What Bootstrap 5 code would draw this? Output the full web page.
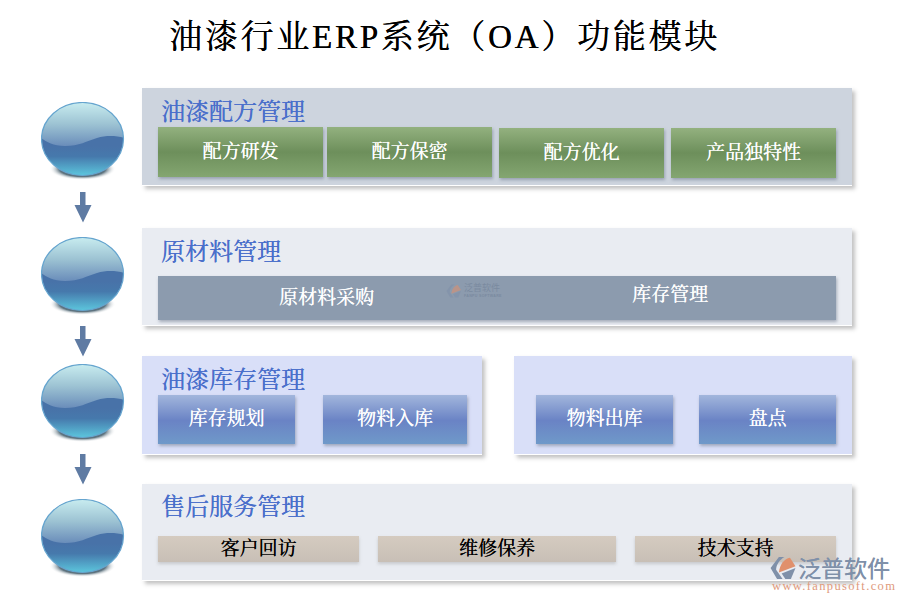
<!DOCTYPE html>
<html lang="zh">
<head>
<meta charset="utf-8">
<title>油漆行业ERP系统（OA）功能模块</title>
<link href="https://cdn.jsdelivr.net/npm/bootstrap@5.3.0/dist/css/bootstrap.min.css" rel="stylesheet">
<style>
html,body{height:600px;overflow:hidden;background:#fff}
body{font-family:"Liberation Serif","Noto Serif CJK SC","Noto Sans CJK SC",serif;position:relative}
.page-title{font-size:33px;font-weight:400;line-height:40px;height:88px;margin:0;padding:17px 0 0 169px;letter-spacing:2.75px;color:#000;font-family:inherit;text-shadow:.3px 0 0 #000}
.sphere-col{width:142px;flex:none;padding-left:41px}
.sphere-col svg{display:block}
.panel-box{box-shadow:3px 3px 4px rgba(120,120,120,.45);border-bottom:1px solid #fff;position:relative}
.panel-h{font-size:24px;line-height:30px;color:#4a6fcb;padding-left:19px;letter-spacing:0;margin:0;font-weight:400;font-family:inherit;text-shadow:.3px 0 0 #4a6fcb}
.tone-a{background:#cdd4de}
.tone-b{background:#e9ecf2}
.tone-c{background:#d9dff8}
.s1{height:98px;width:710px;padding-top:9px}
.s2{height:98px;width:710px;padding-top:9px}
.s3{height:99px;width:340px;padding-top:9px}
.s3b{height:99px;width:338px;margin-left:32px;padding-top:39px}
.s4{height:97px;width:710px;padding-top:8px}
.arrow-gap{padding-left:74px;display:flex;align-items:center}
.g1{height:42px}.g2{height:30px}.g3{height:29px}
.tile{display:flex;align-items:center;justify-content:center;font-size:19px;color:#fff;box-shadow:1px 2px 3px rgba(110,120,140,.55);flex:none;text-shadow:.35px 0 0 currentColor}
.green{height:50px;background:linear-gradient(#93b17f 0%,#6d8f5b 50%,#84a671 100%)}
.slate{height:44px;background:#8c9bae;margin:9px 16px 0}
.blue{height:49px;background:linear-gradient(#a2b6dc 0%,#6a83c5 52%,#6f99c9 100%)}
.tan{height:26px;background:linear-gradient(#d5cbc0,#c8bfb6);color:#000;box-shadow:0 2px 3px rgba(150,150,150,.4)}
.row-a{display:flex;padding-left:16px;margin-top:0}
.w165{width:165px}.ml4{margin-left:4px}.ml7{margin-left:7px;margin-top:1px}
.slate-txt{position:absolute;top:0;height:44px;display:flex;align-items:center}
.t1{left:121px;padding-top:1px}.t2{left:474px;padding-bottom:5px}
.w137{width:137px}.w144{width:144px;margin-left:28px}.ml22{margin-left:22px}.w137b{width:137px;margin-left:26px}
.w201{width:201px}.w238{width:238px;margin-left:19px}.w201b{width:201px;margin-left:19px}
.row-c{display:flex;padding-left:16px;margin-top:14px}
.wm-center{position:absolute;left:446px;top:283px;display:flex;align-items:center;gap:2px;opacity:.55;color:#6c7d95;font-family:"Noto Sans CJK SC",sans-serif}
.wm-stack{display:flex;flex-direction:column;gap:1px;font-size:9px;line-height:10px}
.wm-sub{font-size:3.6px;line-height:4px;letter-spacing:.3px;font-family:"Liberation Sans",sans-serif;font-weight:700}
.wm-corner{position:absolute;left:770px;top:556px;width:125px;height:36px;color:#7f90a9;font-family:"Noto Sans CJK SC",sans-serif}
.wm-corner svg{display:block}
.wm-name{font-size:23px;line-height:20px;letter-spacing:0;position:absolute;left:28px;top:1px;white-space:nowrap;text-shadow:.3px 0 0 #7f90a9}
.wm-url{position:absolute;left:2px;top:25px;font-family:"Liberation Serif",serif;font-size:12.5px;letter-spacing:1.35px;line-height:11px;color:#e09a7c;white-space:nowrap}
</style>
</head>
<body>
<svg width="0" height="0" class="position-absolute">
<defs>
<linearGradient id="topg" x1="0" y1="0" x2="0" y2="1"><stop offset="0" stop-color="#c9edf0"/><stop offset=".5" stop-color="#9dc3d3"/><stop offset="1" stop-color="#6a8dba"/></linearGradient>
<linearGradient id="botg" x1="0" y1="0" x2="0" y2="1"><stop offset="0" stop-color="#4872a8"/><stop offset=".6" stop-color="#4872a8"/><stop offset=".74" stop-color="#4679ac"/><stop offset="1" stop-color="#5cc6dd"/></linearGradient>
<radialGradient id="shd"><stop offset="0" stop-color="#3e5560"/><stop offset=".7" stop-color="#5f7480"/><stop offset="1" stop-color="#fff" stop-opacity="0"/></radialGradient>
<clipPath id="ball"><ellipse cx="41.5" cy="37" rx="41" ry="36.5"/></clipPath>
<symbol id="orb" viewBox="0 0 84 84">
<ellipse cx="41.5" cy="67" rx="33" ry="11" fill="url(#shd)"/>
<ellipse cx="41.5" cy="37" rx="41" ry="36.500" fill="url(#botg)"/>
<g clip-path="url(#ball)"><path d="M0 0H84V36C76 34 66 33 56 36C46 39 38 44 24 44C12 44 6 40 0 36Z" fill="url(#topg)"/></g>
<ellipse cx="41.5" cy="37" rx="41" ry="36.5" fill="none" stroke="#66a5cf" stroke-width="1.2"/>
</symbol>
<symbol id="arr" viewBox="0 0 18 31"><path d="M6 0H11.5V13H17.5L9 30.500 .5 13H6Z" fill="#5f7ba3"/></symbol>
<symbol id="logo" viewBox="0 0 28 26"><path d="M9 1 0 13l7 12h6L6 15C6 9 10 4 15 1Z" fill="#7f90a9"/><path d="M9 18C10 9 15 3 21 2l6 9Z" fill="#e0906c"/><path d="M12 19l15-6-5 12h-6Z" fill="#7f90a9"/></symbol>
</defs>
</svg>

<h1 class="page-title">油漆行业ERP系统（OA）功能模块</h1>

<div class="d-flex">
  <div class="sphere-col"><svg width="84" height="84" style="margin-top:14px"><use href="#orb"/></svg></div>
  <section class="panel-box tone-a s1">
    <h2 class="panel-h">油漆配方管理</h2>
    <div class="row-a">
      <div class="tile green w165">配方研发</div>
      <div class="tile green w165 ml4">配方保密</div>
      <div class="tile green w165 ml7">配方优化</div>
      <div class="tile green w165 ml7">产品独特性</div>
    </div>
  </section>
</div>

<div class="arrow-gap g1"><svg width="18" height="31"><use href="#arr"/></svg></div>

<div class="d-flex">
  <div class="sphere-col"><svg width="84" height="84" style="margin-top:9px"><use href="#orb"/></svg></div>
  <section class="panel-box tone-b s2">
    <h2 class="panel-h">原材料管理</h2>
    <div class="tile slate position-relative">
      <span class="slate-txt t1">原材料采购</span>
      <span class="slate-txt t2">库存管理</span>
    </div>
  </section>
</div>

<div class="arrow-gap g2"><svg width="18" height="31"><use href="#arr"/></svg></div>

<div class="d-flex">
  <div class="sphere-col"><svg width="84" height="84" style="margin-top:8px"><use href="#orb"/></svg></div>
  <section class="panel-box tone-c s3">
    <h2 class="panel-h">油漆库存管理</h2>
    <div class="d-flex ps-3">
      <div class="tile blue w137">库存规划</div>
      <div class="tile blue w144">物料入库</div>
    </div>
  </section>
  <section class="panel-box tone-c s3b">
    <div class="d-flex ml22">
      <div class="tile blue w137">物料出库</div>
      <div class="tile blue w137b">盘点</div>
    </div>
  </section>
</div>

<div class="arrow-gap g3"><svg width="18" height="31"><use href="#arr"/></svg></div>

<div class="d-flex">
  <div class="sphere-col"><svg width="84" height="84" style="margin-top:15px"><use href="#orb"/></svg></div>
  <section class="panel-box tone-b s4">
    <h2 class="panel-h">售后服务管理</h2>
    <div class="row-c">
      <div class="tile tan w201">客户回访</div>
      <div class="tile tan w238">维修保养</div>
      <div class="tile tan w201b">技术支持</div>
    </div>
  </section>
</div>

<div class="wm-center"><svg width="16" height="14"><use href="#logo"/></svg><div class="wm-stack"><span>泛普软件</span><span class="wm-sub">FANPU SOFTWARE</span></div></div>
<div class="wm-corner">
  <svg width="27" height="24"><use href="#logo"/></svg>
  <span class="wm-name">泛普软件</span>
  <span class="wm-url">www.fanpusoft.com</span>
</div>
</body>
</html>
